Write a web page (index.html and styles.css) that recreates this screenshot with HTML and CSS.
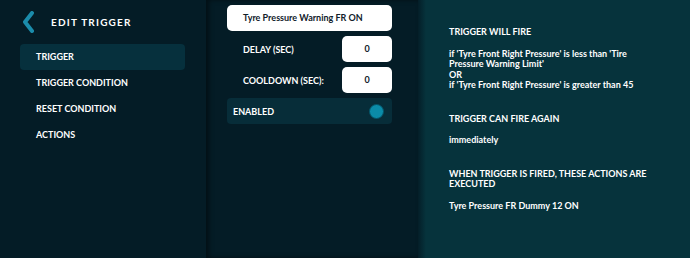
FILE: index.html
```html
<!DOCTYPE html>
<html lang="en">
<head>
    <meta charset="UTF-8">
    <meta name="viewport" content="width=device-width, initial-scale=1.0">
    <title>Edit Trigger</title>
    <link rel="stylesheet" href="styles.css">
</head>
<body>
    <div class="app">
        <!-- left menu -->
        <nav class="sidebar">
            <div class="sidebar-head">
                <svg class="back" width="12" height="22" viewBox="0 0 12 22">
                    <path d="M10 2 L3 11 L10 20" fill="none" stroke="#1b8cab" stroke-width="4" stroke-linecap="round" stroke-linejoin="round"/>
                </svg>
                <span class="title">EDIT TRIGGER</span>
            </div>
            <ul class="menu">
                <li class="active">TRIGGER</li>
                <li>TRIGGER CONDITION</li>
                <li>RESET CONDITION</li>
                <li>ACTIONS</li>
            </ul>
        </nav>

        <!-- trigger form -->
        <section class="editor">
            <div class="name-box">Tyre Pressure Warning FR ON</div>
            <div class="field-row">
                <span class="field-label">DELAY (SEC)</span>
                <div class="num-box">0</div>
            </div>
            <div class="field-row">
                <span class="field-label">COOLDOWN (SEC):</span>
                <div class="num-box">0</div>
            </div>
            <div class="enabled-row">
                <span>ENABLED</span>
                <span class="toggle"></span>
            </div>
        </section>

        <!-- summary -->
        <section class="summary">
            <h4>TRIGGER WILL FIRE</h4>
            <p>if 'Tyre Front Right Pressure' is less than 'Tire Pressure Warning Limit'<br>OR<br>if 'Tyre Front Right Pressure' is greater than 45</p>
            <h4 class="gap">TRIGGER CAN FIRE AGAIN</h4>
            <p>immediately</p>
            <h4 class="gap">WHEN TRIGGER IS FIRED, THESE ACTIONS ARE EXECUTED</h4>
            <p>Tyre Pressure FR Dummy 12 ON</p>
        </section>
    </div>
</body>
</html>
```

FILE: styles.css
```css
body {
    margin: 0;
    padding: 0;
    font-family: Lato, "Open Sans", sans-serif;
    font-weight: bold;
    color: #fff;
    background-color: #041c26;
}

.app {
    display: flex;
    height: 258px;
}

.sidebar {
    width: 206px;
    background-color: #041c26;
}

.sidebar-head {
    display: flex;
    align-items: center;
    height: 22px;
    padding: 11px 0 0 22px;
}

.title {
    margin-left: 17px;
    font-size: 10px;
    letter-spacing: 1.2px;
}

.menu {
    list-style: none;
    margin: 11px 0 0 20px;
    padding: 0;
    width: 165px;
}

.menu li {
    height: 26px;
    line-height: 26px;
    padding-left: 16px;
    font-size: 9px;
    border-radius: 4px;
}

.menu li.active {
    background-color: #06303d;
}

.editor {
    width: 165px;
    padding: 5px 26px 0 21px;
    background-color: #041c26;
    box-shadow: inset 3px 0 5px rgba(0, 0, 0, 0.45);
}

.name-box {
    height: 26px;
    line-height: 26px;
    padding-left: 16px;
    font-size: 9px;
    color: #10202a;
    background-color: #fff;
    border-radius: 5px;
}

.field-row {
    display: flex;
    align-items: center;
    justify-content: space-between;
    margin-top: 5px;
}

.field-label {
    padding-left: 16px;
    font-size: 9px;
}

.num-box {
    width: 50px;
    height: 26px;
    line-height: 26px;
    text-align: center;
    font-size: 9px;
    color: #10202a;
    background-color: #fff;
    border-radius: 5px;
}

.enabled-row {
    display: flex;
    align-items: center;
    justify-content: space-between;
    height: 26px;
    margin-top: 5px;
    padding: 0 8px 0 6px;
    font-size: 9px;
    background-color: #072d39;
    border-radius: 4px;
}

.toggle {
    width: 13px;
    height: 13px;
    border-radius: 50%;
    background-color: #0b8ba8;
    border: 1.5px solid #045367;
}

.summary {
    flex: 1;
    padding: 27px 41px 0 31px;
    font-size: 9px;
    background: linear-gradient(to right, #041e28 0, #06333c 8px);
}

.summary h4 {
    margin: 0;
    font-size: 9px;
    line-height: 10.5px;
}

.summary h4.gap {
    margin-top: 23px;
}

.summary p {
    margin: 11px 0 0;
    line-height: 10.5px;
}
```
